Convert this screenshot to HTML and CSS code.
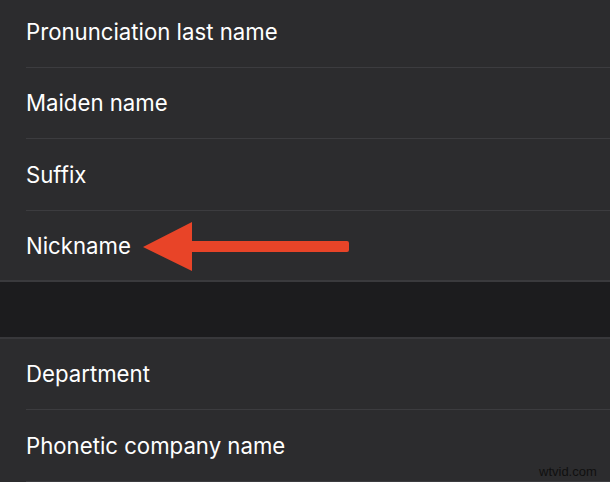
FILE: index.html
```html
<!DOCTYPE html>
<html>
<head>
<meta charset="utf-8">
<link rel="stylesheet" href="styles.css">
</head>
<body>
<div class="screen">
  <div class="group first">
    <div class="row"><span class="label">Pronunciation last name</span></div>
    <div class="row"><span class="label">Maiden name</span></div>
    <div class="row"><span class="label">Suffix</span></div>
    <div class="row last"><span class="label">Nickname</span></div>
  </div>
  <div class="band"></div>
  <div class="group">
    <div class="row"><span class="label">Department</span></div>
    <div class="row"><span class="label">Phonetic company name</span></div>
  </div>
  <svg class="arrow" width="210" height="52" viewBox="0 0 210 52">
    <path d="M0 25 L49 0 L49 19 L204 19 Q206 19 206 21 L206 28 Q206 30 204 30 L49 30 L49 49 Z" fill="#e84428"/>
  </svg>
  <div class="watermark">wtvid.com</div>
</div>
</body>
</html>
```
FILE: styles.css
```css
html, body {
  margin: 0;
  padding: 0;
  background: #2c2c2e;
}
.screen {
  position: relative;
  width: 610px;
  height: 482px;
  overflow: hidden;
  font-family: Inter, "Liberation Sans", sans-serif;
  color: #ffffff;
}
.group {
  background: #2c2c2e;
}
.group.first {
  margin-top: -4px;
}
.row {
  margin-left: 26px;
  height: 70.5px;
  border-bottom: 1px solid #3c3c3f;
  display: flex;
  align-items: center;
}
.row.last {
  margin-left: 0;
  padding-left: 26px;
  height: 69px;
  border-bottom: 2px solid #3a3a3d;
}
.label {
  font-size: 22.2px;
  letter-spacing: 0;
}
.band {
  height: 55px;
  background: #1c1c1e;
  border-bottom: 2px solid #38383b;
}
.arrow {
  position: absolute;
  left: 143px;
  top: 222px;
}
.watermark {
  position: absolute;
  left: 539px;
  top: 464px;
  font-family: "Liberation Sans", sans-serif;
  font-size: 13px;
  color: #101010;
}
```
